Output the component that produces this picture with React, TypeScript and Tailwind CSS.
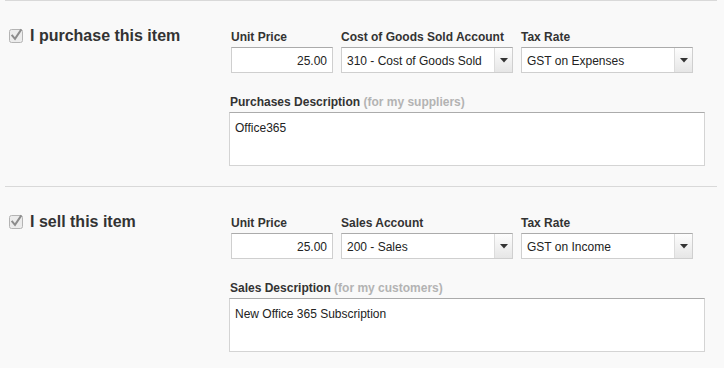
import React from "react";

const font = { fontFamily: '"Liberation Sans", Arial, sans-serif' };

function CheckIcon() {
  return (
    <svg width="16" height="16" viewBox="0 0 16 16" className="block">
      <rect x="0.5" y="1.5" width="13" height="13" rx="2" fill="#ececec" stroke="#b4b4b4" />
      <path d="M3.3 7.6 L6 10.8 L11.8 2.2" fill="none" stroke="#8c8c8c" strokeWidth="2" strokeLinecap="square" />
    </svg>
  );
}

function Arrow() {
  return (
    <div className="w-[18px] h-full flex items-center justify-center border-l border-[#dcdcdc] bg-gradient-to-b from-[#fdfdfd] to-[#e6e6e6]">
      <svg width="8" height="5" viewBox="0 0 8 5" className="block">
        <path d="M0 0 H8 L4 4.5 Z" fill="#333" />
      </svg>
    </div>
  );
}

function Field({ label, children, width }: { label: string; children: React.ReactNode; width: string }) {
  return (
    <div className={`flex flex-col ${width}`}>
      <div className="text-[12px] leading-[14px] font-bold text-[#333] h-[14px] mb-[3px] whitespace-nowrap">{label}</div>
      {children}
    </div>
  );
}

function Select({ value }: { value: string }) {
  return (
    <div className="h-[26px] bg-white border border-[#cfcfcf] border-t-[#ababab] flex items-stretch">
      <div className="flex-1 text-[12px] text-[#222] pl-[5px] pt-[1px] flex items-center whitespace-nowrap overflow-hidden">{value}</div>
      <Arrow />
    </div>
  );
}

function Section({
  title,
  account,
  accountLabel,
  tax,
  descLabel,
  hint,
  desc,
}: {
  title: string;
  account: string;
  accountLabel: string;
  tax: string;
  descLabel: string;
  hint: string;
  desc: string;
}) {
  return (
    <div className="ml-[5px] mr-[7px] border-t border-[#d9d9d9] flex">
      <div className="w-[224px] pl-[4px] pt-[26px] flex items-start gap-[5px]">
        <div className="pt-[1px]">
          <CheckIcon />
        </div>
        <div className="text-[16px] leading-[18px] font-bold text-[#333] whitespace-nowrap">{title}</div>
      </div>
      <div className="pt-[29px] pb-[20px] w-[476px]">
        <div className="flex gap-[8px] pl-[2px]">
          <Field label="Unit Price" width="w-[102px]">
            <div className="h-[26px] bg-white border border-[#cfcfcf] border-t-[#ababab] text-[12px] text-[#222] flex items-center justify-end pr-[5px] pt-[1px]">
              25.00
            </div>
          </Field>
          <Field label={accountLabel} width="w-[172px]">
            <Select value={account} />
          </Field>
          <Field label="Tax Rate" width="w-[172px]">
            <Select value={tax} />
          </Field>
        </div>
        <div className="mt-[22px] text-[12px] leading-[14px] h-[14px] mb-[3px] font-bold text-[#333] pl-[1px] whitespace-nowrap">
          {descLabel} <span className="text-[#b3b3b3]">{hint}</span>
        </div>
        <div className="h-[54px] bg-white border border-[#d4d4d4] border-t-[#ababab] text-[12px] text-[#222] pl-[5px] pt-[6px]">
          {desc}
        </div>
      </div>
    </div>
  );
}

export default function App() {
  return (
    <div className="w-[724px] h-[368px] bg-[#f9f9f9] overflow-hidden" style={font}>
      <Section
        title="I purchase this item"
        accountLabel="Cost of Goods Sold Account"
        account="310 - Cost of Goods Sold"
        tax="GST on Expenses"
        descLabel="Purchases Description"
        hint="(for my suppliers)"
        desc="Office365"
      />
      <Section
        title="I sell this item"
        accountLabel="Sales Account"
        account="200 - Sales"
        tax="GST on Income"
        descLabel="Sales Description"
        hint="(for my customers)"
        desc="New Office 365 Subscription"
      />
    </div>
  );
}
